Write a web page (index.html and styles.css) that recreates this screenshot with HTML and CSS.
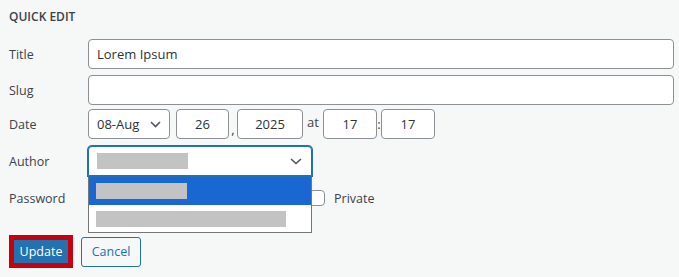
FILE: index.html
```html
<!DOCTYPE html>
<html>
<head>
<meta charset="utf-8">
<link rel="stylesheet" href="styles.css">
</head>
<body>
<div class="panel">
  <h2 class="heading">QUICK EDIT</h2>
  <div class="row row-title">
    <span class="label">Title</span>
    <div class="field field-wide"><span class="value">Lorem Ipsum</span></div>
  </div>
  <div class="row row-slug">
    <span class="label">Slug</span>
    <div class="field field-wide"></div>
  </div>
  <div class="row row-date">
    <span class="label">Date</span>
    <div class="field select-month"><span class="value">08-Aug</span>
      <svg class="chev" width="11" height="7" viewBox="0 0 11 7"><polyline points="1,1 5.5,5.5 10,1" fill="none" stroke="#50575e" stroke-width="1.6"/></svg>
    </div>
    <div class="field num day">26</div>
    <span class="sep sep-comma">,</span>
    <div class="field num year">2025</div>
    <span class="sep sep-at">at</span>
    <div class="field num hour">17</div>
    <span class="sep sep-colon">:</span>
    <div class="field num minute">17</div>
  </div>
  <div class="row row-author">
    <span class="label">Author</span>
    <div class="author-wrap">
      <div class="field author-select">
        <span class="blur blur-short"></span>
        <svg class="chev" width="12" height="7" viewBox="0 0 12 7"><polyline points="1,1 6,5.5 11,1" fill="none" stroke="#50575e" stroke-width="1.6"/></svg>
      </div>
      <div class="dropdown">
        <div class="option selected"><span class="blur blur-short"></span></div>
        <div class="option"><span class="blur blur-long"></span></div>
      </div>
    </div>
  </div>
  <div class="row row-password">
    <span class="label">Password</span>
    <div class="field password"></div>
    <span class="checkbox"></span>
    <span class="private">Private</span>
  </div>
  <div class="actions">
    <div class="highlight"><span class="btn-primary">Update</span></div>
    <span class="btn-secondary">Cancel</span>
  </div>
</div>
</body>
</html>
```
FILE: styles.css
```css
* { box-sizing: border-box; }
html, body {
  margin: 0;
  padding: 0;
  background: #f6f7f7;
}
body {
  font-family: "Open Sans", "Liberation Sans", sans-serif;
  color: #3c434a;
  width: 679px;
  height: 277px;
  overflow: hidden;
}
.panel {
  padding: 0 5px 0 9px;
}
.heading {
  margin: 0;
  padding-top: 8px;
  height: 26px;
  line-height: 18px;
  font-size: 12px;
  font-weight: 600;
  color: #3c434a;
  letter-spacing: 0;
}
.row {
  display: flex;
  align-items: center;
  height: 30px;
}
.row-title { margin-top: 13px; }
.row-slug { margin-top: 6px; }
.row-date { margin-top: 4px; }
.row-author { margin-top: 7px; }
.row-password { margin-top: 7px; }
.label {
  width: 79px;
  flex: none;
  font-size: 12.5px;
  color: #3c434a;
}
.field {
  height: 30px;
  background: #fff;
  border: 1px solid #8c8f94;
  border-radius: 4px;
  display: flex;
  align-items: center;
  font-size: 13px;
  color: #2c3338;
}
.field-wide {
  flex: 1;
  padding-left: 8px;
}
.select-month {
  width: 82px;
  padding: 0 8px;
  justify-content: space-between;
}
.chev { display: block; }
.num {
  justify-content: center;
}
.day { width: 53px; margin-left: 6px; }
.year { width: 66px; }
.hour { width: 54px; }
.minute { width: 54px; }
.sep {
  font-size: 13px;
  color: #3c434a;
  text-align: center;
}
.sep-comma { width: 8px; padding-top: 10px; line-height: 13px; }
.sep-at { width: 20px; padding-bottom: 4px; }
.sep-colon { width: 4px; }
.author-wrap {
  position: relative;
  width: 224px;
  height: 30px;
}
.author-select {
  width: 224px;
  border-color: #2271b1;
  box-shadow: 0 0 0 1px #2271b1;
  border-radius: 4px 4px 0 0;
  padding: 0 9px 0 8px;
  justify-content: space-between;
}
.blur {
  display: block;
  height: 16px;
  background: #c3c3c3;
}
.blur-short { width: 91px; }
.blur-long { width: 190px; }
.dropdown {
  position: absolute;
  left: 0;
  top: 31px;
  width: 224px;
  background: #fff;
  border: 1px solid #767676;
  border-top: none;
  z-index: 2;
}
.option {
  height: 28px;
  padding-left: 7px;
  display: flex;
  align-items: center;
}
.option:last-child { height: 27px; }
.option.selected { background: #1967d2; }
.password {
  width: 214px;
}
.checkbox {
  width: 16px;
  height: 16px;
  margin-left: 7px;
  background: #fff;
  border: 1px solid #8c8f94;
  border-radius: 4px;
}
.private {
  margin-left: 9px;
  font-size: 12.5px;
  color: #3c434a;
}
.actions {
  display: flex;
  align-items: center;
  margin-top: 22px;
}
.highlight {
  width: 64px;
  height: 33px;
  border: 5px solid #c6010f;
  background: #2271b1;
  display: flex;
  align-items: center;
  justify-content: center;
}
.btn-primary {
  color: #fff;
  font-size: 12.5px;
}
.btn-secondary {
  margin-left: 8px;
  width: 60px;
  height: 30px;
  border: 1px solid #2271b1;
  border-radius: 3px;
  color: #2271b1;
  font-size: 12.5px;
  display: flex;
  align-items: center;
  justify-content: center;
}
```
